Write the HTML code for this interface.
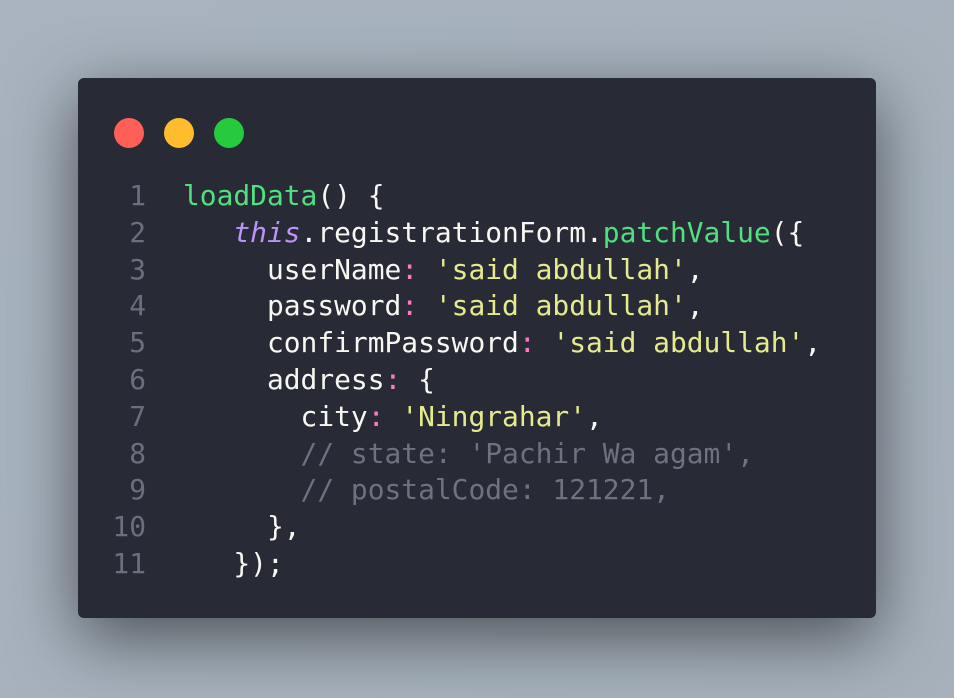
<!DOCTYPE html>
<html><head><style>
html,body{margin:0;padding:0;}
body{width:954px;height:698px;overflow:hidden;background:linear-gradient(135deg,#a8b3bf,#a6b1bc);position:relative;}
.card{position:absolute;left:78px;top:78px;width:798px;height:540px;background:#282a36;border-radius:6px;box-shadow:0 20px 68px rgba(0,0,0,0.55);}
.dot{position:absolute;top:40px;width:30px;height:30px;border-radius:50%;}
pre{position:absolute;margin:0;left:0;top:100px;font-family:"DejaVu Sans Mono","Liberation Mono",monospace;font-size:27.9px;line-height:36.8px;color:#f8f8f2;}
.ln{display:inline-block;width:68px;text-align:right;color:#6b6e7c;margin-right:37px;}
.g{color:#50e080}.p{color:#bd93f9;font-style:italic}.k{color:#ff79c6}.y{color:#e6ea8f}.c{color:#6d7180}
</style></head><body>
<div class="card">
<div class="dot" style="left:36px;background:#ff5f56"></div>
<div class="dot" style="left:86px;background:#ffbd2e"></div>
<div class="dot" style="left:136px;background:#27c93f"></div>
<pre><span class="ln">1</span><span class="g">loadData</span>() {
<span class="ln">2</span>   <span class="p">this</span>.registrationForm.<span class="g">patchValue</span>({
<span class="ln">3</span>     userName<span class="k">:</span> <span class="y">'said abdullah'</span>,
<span class="ln">4</span>     password<span class="k">:</span> <span class="y">'said abdullah'</span>,
<span class="ln">5</span>     confirmPassword<span class="k">:</span> <span class="y">'said abdullah'</span>,
<span class="ln">6</span>     address<span class="k">:</span> {
<span class="ln">7</span>       city<span class="k">:</span> <span class="y">'Ningrahar'</span>,
<span class="ln">8</span>       <span class="c">// state: 'Pachir Wa agam',</span>
<span class="ln">9</span>       <span class="c">// postalCode: 121221,</span>
<span class="ln">10</span>     },
<span class="ln">11</span>   });</pre>
</div>
</body></html>
